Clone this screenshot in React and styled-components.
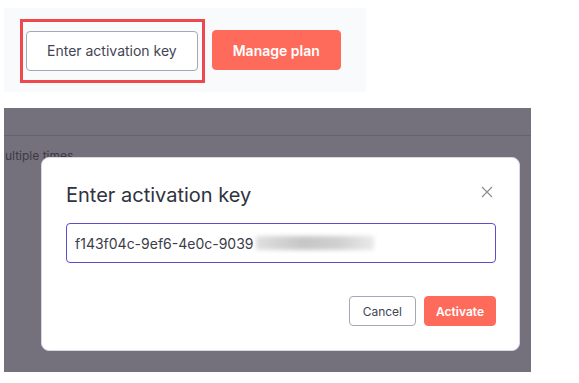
import React from 'react';
import styled, { createGlobalStyle } from 'styled-components';

const GlobalStyle = createGlobalStyle`
  body {
    margin: 0;
    background: #ffffff;
    font-family: Inter, "Noto Sans", sans-serif;
  }
`;

const Page = styled.div`
  display: flex;
  flex-direction: column;
  align-items: flex-start;
  padding: 8px 0 0 4px;
  gap: 16px;
`;

const TopPanel = styled.div`
  width: 362px;
  height: 84px;
  background: #f9fafc;
  display: flex;
  align-items: center;
  padding-left: 16px;
  box-sizing: border-box;
  gap: 7px;
`;

const Highlight = styled.div`
  border: 3px solid #f0474f;
  padding: 9px 4px 9px 3px;
  margin-top: 1px;
`;

const Button = styled.button`
  height: ${p => p.$h || 40}px;
  padding: 0 ${p => p.$px || 20}px;
  border-radius: 4px;
  font-family: Inter, "Noto Sans", sans-serif;
  font-size: ${p => p.$fs || 14}px;
  cursor: pointer;
  box-sizing: border-box;
  border: 1px solid ${p => (p.$primary ? '#ff6b5a' : '#a3a9b5')};
  background: ${p => (p.$primary ? '#ff6b5a' : '#ffffff')};
  color: ${p => (p.$primary ? '#ffffff' : '#3f4555')};
  font-weight: ${p => (p.$primary ? 600 : 400)};
`;

const Overlay = styled.div`
  position: relative;
  width: 527px;
  height: 264px;
  background: #75717c;
  overflow: hidden;
`;

const OverlayHeader = styled.div`
  height: 27px;
  border-bottom: 1px solid #67636e;
`;

const BehindText = styled.div`
  margin: 12px 0 0 1px;
  font-size: 12px;
  color: #3c3944;
`;

const Modal = styled.div`
  position: absolute;
  left: 37px;
  top: 49px;
  width: 479px;
  height: 194px;
  box-sizing: border-box;
  background: #ffffff;
  border: 1px solid #d9d8e6;
  border-radius: 8px;
  padding: 24px 23px 24px 24px;
  display: flex;
  flex-direction: column;
`;

const ModalHead = styled.div`
  display: flex;
  justify-content: space-between;
  align-items: flex-start;
`;

const Title = styled.h2`
  margin: 0;
  font-size: 20px;
  font-weight: 400;
  color: #303340;
  line-height: 26px;
`;

const Close = styled.button`
  border: none;
  background: none;
  padding: 0;
  margin: 4px 3px 0 0;
  width: 12px;
  height: 12px;
  display: flex;
  cursor: pointer;
`;

const KeyField = styled.div`
  margin-top: 15px;
  height: 40px;
  box-sizing: border-box;
  border: 1px solid #5a4fc8;
  border-radius: 4px;
  display: flex;
  align-items: center;
  padding-left: 8px;
  font-size: 14px;
  color: #3a3d48;
  overflow: hidden;
`;

const Blurred = styled.span`
  display: inline-block;
  width: 118px;
  height: 14px;
  margin-left: 2px;
  background: linear-gradient(90deg, #e0e0e0, #c6c6c6 40%, #d0d0d0 70%, #eaeaea);
  filter: blur(2px);
`;

const Footer = styled.div`
  margin-top: auto;
  display: flex;
  justify-content: flex-end;
  gap: 8px;
`;

export default function App() {
  return (
    <>
      <GlobalStyle />
      <Page>
        <TopPanel>
          <Highlight>
            <Button>Enter activation key</Button>
          </Highlight>
          <Button $primary>Manage plan</Button>
        </TopPanel>
        <Overlay>
          <OverlayHeader />
          <BehindText>ultiple times</BehindText>
          <Modal>
            <ModalHead>
              <Title>Enter activation key</Title>
              <Close aria-label="Close">
                <svg width="12" height="12" viewBox="0 0 12 12">
                  <path d="M1 1 L11 11 M11 1 L1 11" stroke="#8a8d96" strokeWidth="1.2" fill="none" />
                </svg>
              </Close>
            </ModalHead>
            <KeyField>
              f143f04c-9ef6-4e0c-9039<Blurred />
            </KeyField>
            <Footer>
              <Button $h={30} $px={13} $fs={12}>Cancel</Button>
              <Button $primary $h={30} $px={11} $fs={12}>Activate</Button>
            </Footer>
          </Modal>
        </Overlay>
      </Page>
    </>
  );
}
